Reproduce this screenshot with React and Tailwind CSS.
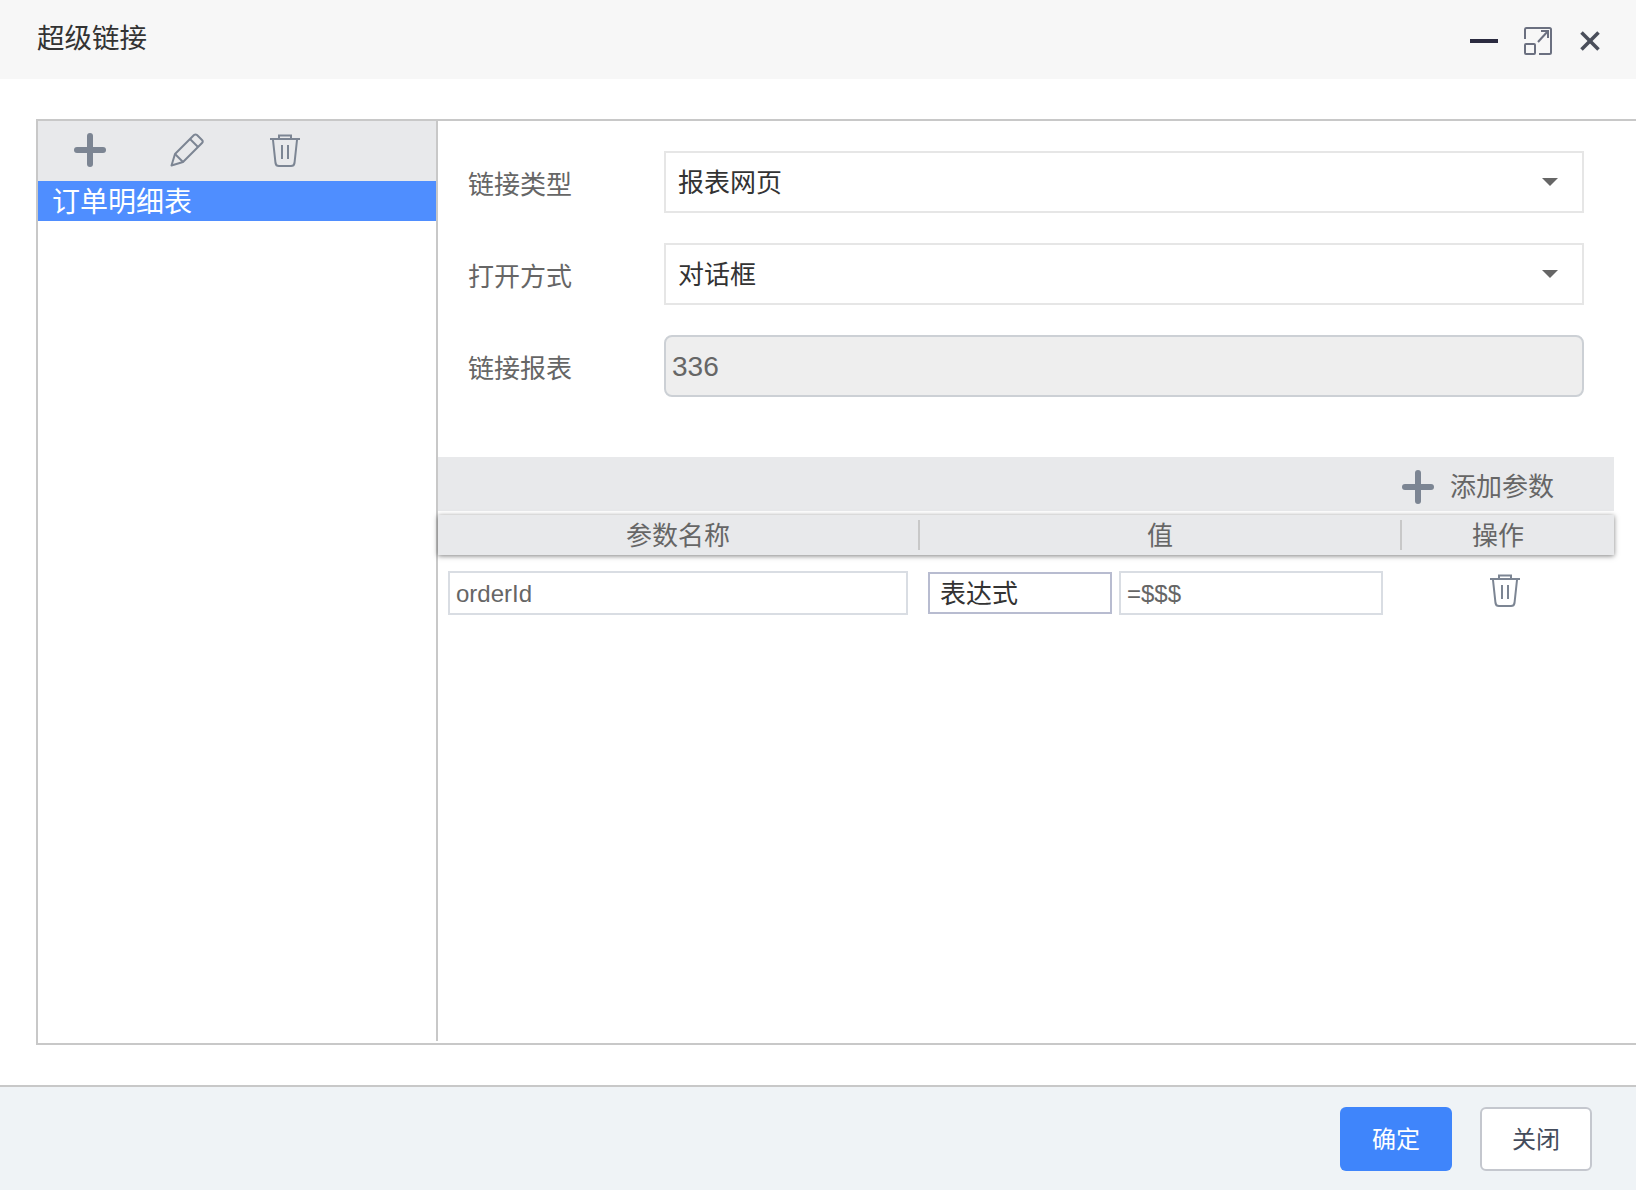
import React from "react";

const PlusIcon = () => (
  <svg width="32" height="34" viewBox="0 0 32 34" fill="none" stroke="#7c8593" strokeWidth="6" strokeLinecap="round">
    <path d="M16 3V31" />
    <path d="M3 17H29" />
  </svg>
);

const PencilIcon = () => (
  <svg width="34" height="34" viewBox="0 0 34 34" fill="none" stroke="#7c8593" strokeWidth="2" strokeLinejoin="round">
    <path d="M1.5 32.5L5 21L24 2Q25.5 1 27 2L32 7Q33.5 8.500 32 10L13 29Z" />
    <path d="M20 6L28 14" />
    <path d="M5 21L13 29" />
  </svg>
);

const TrashIcon = () => (
  <svg width="30" height="33" viewBox="0 0 30 33" fill="none" stroke="#7c8593" strokeWidth="2">
    <path d="M0 5H30" />
    <path d="M9 4V1.500H21V4" />
    <path d="M3 6L5.500 29Q6 32 9 32H21Q24 32 24.500 29L27 6" />
    <path d="M12 11V25" />
    <path d="M18 11V25" />
  </svg>
);

const Caret = () => (
  <svg width="16" height="8" viewBox="0 0 16 8" fill="#666666">
    <path d="M0 0H16L8 8Z" />
  </svg>
);

const SelectBox = ({ value }) => (
  <div className="h-[62px] w-[920px] flex items-center justify-between border-2 border-[#e6e6e6] bg-white pl-[12px] pr-[24px] text-[26px] text-[#333333]">
    <span className="pt-[2px]">{value}</span>
    <Caret />
  </div>
);

const FormRow = ({ label, children }) => (
  <div className="flex items-center">
    <div className="w-[196px] -ml-[1px] pt-[6px] text-[26px] text-[#666666]">{label}</div>
    {children}
  </div>
);

const App = () => {
  return (
    <div
      className="w-[1636px] h-[1190px] flex flex-col overflow-hidden bg-white"
      style={{ fontFamily: '"Liberation Sans", "Noto Sans CJK SC", sans-serif' }}
    >
      <div className="h-[79px] flex items-center justify-between bg-[#f7f7f7] pl-[37px] pr-[36px]">
        <div className="pb-[1px] text-[27.500px] text-[#333333]">超级链接</div>
        <div className="flex items-center pt-[3px]">
          <div className="h-[4px] w-[28px] bg-[#2b2b40]"></div>
          <svg className="ml-[26px]" width="28" height="28" viewBox="0 0 28 28" fill="none" stroke="#6b7080" strokeWidth="2">
            <path d="M1 12V2.500Q1 1 2.500 1H25.500Q27 1 27 2.500V25.500Q27 27 25.500 27H15" />
            <rect x="1" y="17" width="10" height="10" rx="1" />
            <path d="M14 15L24 4" />
            <path d="M17 4H24V11" />
          </svg>
          <svg className="ml-[28px]" width="20" height="20" viewBox="0 0 20 20" fill="none" stroke="#4a4e5a" strokeWidth="3.500">
            <path d="M1.500 1.500L18.500 18.500" />
            <path d="M18.500 1.500L1.500 18.500" />
          </svg>
        </div>
      </div>

      <div className="ml-[36px] mt-[40px] h-[926px] w-[1600px] flex items-start border-2 border-r-0 border-[#c8c8c8]">
        <div className="h-[920px] w-[400px] shrink-0 border-r-2 border-[#c8c8c8]">
          <div className="h-[60px] flex items-center bg-[#e8e9eb] pb-[2px] pl-[36px]">
            <PlusIcon />
            <div className="ml-[64px]"><PencilIcon /></div>
            <div className="ml-[66px]"><TrashIcon /></div>
          </div>
          <div className="h-[40px] flex items-center bg-[#4f8eff] pl-[14px] pt-[4px] text-[28px] text-white">订单明细表</div>
        </div>

        <div className="flex-1">
          <div className="flex flex-col gap-[30px] pl-[31px] pt-[30px]">
            <FormRow label="链接类型"><SelectBox value="报表网页" /></FormRow>
            <FormRow label="打开方式"><SelectBox value="对话框" /></FormRow>
            <FormRow label="链接报表">
              <div className="h-[62px] w-[920px] flex items-center rounded-[8px] border-2 border-[#ccd0d5] bg-[#eeeeee] pl-[6px] pt-[2px] text-[28px] text-[#666666]">336</div>
            </FormRow>
          </div>

          <div className="mt-[60px] h-[54px] w-[1176px] flex items-center justify-end bg-[#e8e9eb] pr-[60px] pt-[5px] text-[26px] text-[#666666]">
            <PlusIcon />
            <span className="ml-[16px] pt-[1px]">添加参数</span>
          </div>

          <div className="mt-[4px] h-[40px] w-[1176px] flex items-center bg-[#e8e9eb] text-[26px] text-[#666666] shadow-[0_1px_5px_rgba(0,0,0,0.5)]">
            <div className="h-[30px] w-[482px] flex items-center justify-center border-r-2 border-[#c8c8c8] pt-[2px]">参数名称</div>
            <div className="h-[30px] w-[482px] flex items-center justify-center border-r-2 border-[#c8c8c8] pt-[2px]">值</div>
            <div className="h-[30px] flex-1 flex items-center justify-center pr-[20px] pt-[2px]">操作</div>
          </div>

          <div className="mt-[16px] flex items-center pl-[10px] text-[24px]">
            <div className="h-[44px] w-[460px] flex items-center border-2 border-[#d9dde3] pl-[6px] pt-[2px] text-[#666666]">orderId</div>
            <div className="ml-[20px] h-[42px] w-[184px] flex items-center border-2 border-[#b8bcd0] pl-[10px] pt-[2px] text-[26px] text-[#333333]">表达式</div>
            <div className="ml-[7px] h-[44px] w-[264px] flex items-center border-2 border-[#d9dde3] pl-[6px] pt-[2px] text-[#666666]">=$$$</div>
            <div className="ml-[107px] pb-[5px]"><TrashIcon /></div>
          </div>
        </div>
      </div>

      <div className="mt-[40px] flex-1 flex items-start justify-end gap-[28px] border-t-2 border-[#c8c8c8] bg-[#eff3f6] pr-[44px] pt-[20px]">
        <button className="h-[64px] w-[112px] rounded-[6px] bg-[#3f85fb] pt-[2px] text-[24px] text-white">确定</button>
        <button className="h-[64px] w-[112px] rounded-[6px] border-2 border-[#c4c7ce] bg-white pt-[2px] text-[24px] text-[#444c5c]">关闭</button>
      </div>
    </div>
  );
};

export default App;
